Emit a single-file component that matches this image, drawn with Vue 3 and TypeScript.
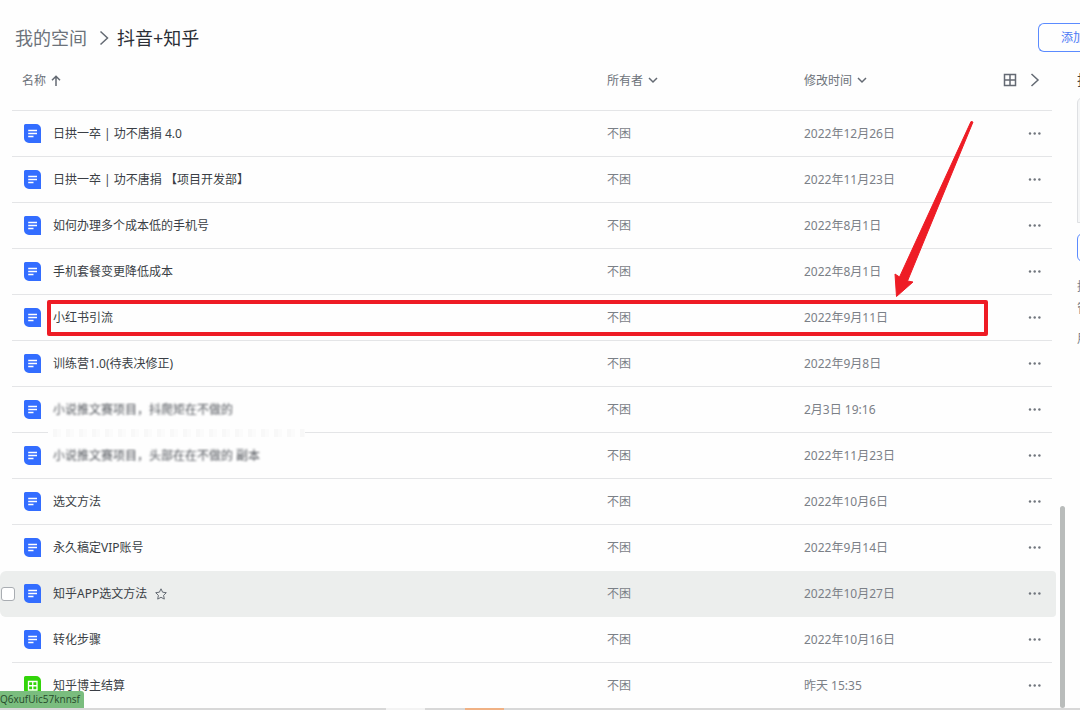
<script setup lang="ts">
interface FileRow {
  name: string
  owner: string
  time: string
  kind?: 'doc' | 'sheet'
  masked?: boolean
  active?: boolean
  marked?: boolean
}

const rows: FileRow[] = [
  { name: '日拱一卒 | 功不唐捐 4.0', owner: '不困', time: '2022年12月26日' },
  { name: '日拱一卒 | 功不唐捐 【项目开发部】', owner: '不困', time: '2022年11月23日' },
  { name: '如何办理多个成本低的手机号', owner: '不困', time: '2022年8月1日' },
  { name: '手机套餐变更降低成本', owner: '不困', time: '2022年8月1日' },
  { name: '小红书引流', owner: '不困', time: '2022年9月11日', marked: true },
  { name: '训练营1.0(待表决修正)', owner: '不困', time: '2022年9月8日' },
  { name: '小说推文赛项目，抖爬矩在不做的', owner: '不困', time: '2月3日 19:16', masked: true },
  { name: '小说推文赛项目，头部在在不做的 副本', owner: '不困', time: '2022年11月23日', masked: true },
  { name: '选文方法', owner: '不困', time: '2022年10月6日' },
  { name: '永久稿定VIP账号', owner: '不困', time: '2022年9月14日' },
  { name: '知乎APP选文方法', owner: '不困', time: '2022年10月27日', active: true },
  { name: '转化步骤', owner: '不困', time: '2022年10月16日' },
  { name: '知乎博主结算', owner: '不困', time: '昨天 15:35', kind: 'sheet' },
]
</script>

<template>
  <div class="page">
    <header class="topbar">
      <nav class="crumbs" aria-label="路径">
        <a href="#" class="parent">我的空间</a>
        <svg width="10" height="16" viewBox="0 0 10 16"><path d="M1.500 1.500 8.500 8l-7 6.500" /></svg>
        <h1>抖音+知乎</h1>
      </nav>
      <button class="add" type="button">添加</button>
    </header>

    <div class="content">
      <main class="list">
        <table>
          <colgroup>
            <col class="c-check" /><col class="c-name" /><col class="c-owner" /><col class="c-time" /><col class="c-more" /><col class="c-end" />
          </colgroup>
          <thead>
            <tr>
              <th></th>
              <th class="name-head">
                <button type="button">名称
                  <svg width="10" height="12" viewBox="0 0 10 12"><path d="M5 11V1.500M1 5.200l4-4 4 4" /></svg>
                </button>
              </th>
              <th>
                <button type="button">所有者
                  <svg width="10" height="12" viewBox="0 0 10 12"><path d="m1 3 4 4 4-4" /></svg>
                </button>
              </th>
              <th>
                <button type="button">修改时间
                  <svg width="10" height="12" viewBox="0 0 10 12"><path d="m1 3 4 4 4-4" /></svg>
                </button>
              </th>
              <th>
                <div class="tools">
                  <button type="button" aria-label="网格视图">
                    <svg width="14" height="14" viewBox="0 0 14 14"><path d="M1.500 1.500h11v11h-11zM7 1.500v11M1.500 7h11" /></svg>
                  </button>
                  <button type="button" aria-label="收起">
                    <svg width="10" height="14" viewBox="0 0 10 14"><path d="M1.500 1 8 7l-6.500 6" /></svg>
                  </button>
                </div>
              </th>
              <th></th>
            </tr>
          </thead>
          <tbody>
            <tr v-for="(row, i) in rows" :key="i" :class="{ active: row.active }">
              <td class="check"><input v-if="row.active" type="checkbox" :aria-label="row.name" /></td>
              <td class="name">
                <div class="file">
                  <svg v-if="row.kind === 'sheet'" class="icon" width="17" height="19" viewBox="0 0 17 19">
                    <path class="green" d="M1.500 0H12a5 5 0 0 1 5 5v14H5a5 5 0 0 1-5-5V1.500A1.500 1.500 0 0 1 1.500 0z" />
                    <path class="line" d="M4.500 5.500h8.500v8.500H4.500zM8.750 5.500V14M4.500 9.750H13" />
                  </svg>
                  <svg v-else class="icon" width="17" height="19" viewBox="0 0 17 19">
                    <path class="blue" d="M1.500 0H12a5 5 0 0 1 5 5v14H5a5 5 0 0 1-5-5V1.500A1.500 1.500 0 0 1 1.500 0z" />
                    <path class="line" d="M4.200 6.500h8.800M4.200 9.500h8.800M4.200 12.500h5.300" />
                  </svg>
                  <a href="#" :class="{ masked: row.masked }">{{ row.name }}</a>
                  <button v-if="row.active" class="star" type="button" aria-label="收藏">
                    <svg width="12" height="12" viewBox="0 0 12 12"><path d="m6 .8 1.600 3.400 3.700.5-2.700 2.600.7 3.800L6 9.300l-3.300 1.800.7-3.800L.7 4.700l3.700-.5z" /></svg>
                  </button>
                </div>
                <div v-if="row.marked" class="marker">
                  <svg class="arrow" width="84" height="180" viewBox="0 0 84 180">
                    <path d="M79 1.500 81 2 15.500 161 21 162 4.500 176.500 3 154 7.500 157z" />
                  </svg>
                </div>
                <div v-if="i === 6" class="smudge"></div>
              </td>
              <td>{{ row.owner }}</td>
              <td>{{ row.time }}</td>
              <td class="more">
                <button type="button" aria-label="更多">
                  <svg width="14" height="4" viewBox="0 0 14 4"><circle cx="2" cy="1.500" r="1.200" /><circle cx="6.700" cy="1.500" r="1.200" /><circle cx="11.400" cy="1.500" r="1.200" /></svg>
                </button>
              </td>
              <td class="end"></td>
            </tr>
          </tbody>
        </table>
      </main>

      <aside class="side">
        <h2>找</h2>
        <div class="card"></div>
        <button type="button" aria-label="打开"></button>
        <p>推<br />管</p>
        <p>用</p>
      </aside>
    </div>

    <div class="scrollbar"></div>
    <div class="status">Q6xufUic57knnsf</div>
    <div class="dock"><i class="light"></i><i class="orange"></i></div>
  </div>
</template>

<style>
body {
  margin: 0;
}
</style>

<style scoped>
.page {
  position: relative;
  height: 100vh;
  overflow: hidden;
  background: #fefefe;
  color: #3a3e45;
  font: 12px/20px "Noto Sans", "Noto Sans CJK SC", sans-serif;
}
button {
  padding: 0;
  border: 0;
  background: none;
  color: inherit;
  font: inherit;
}
a {
  color: inherit;
  text-decoration: none;
}
svg {
  display: block;
  flex: none;
  fill: none;
  stroke: #646a73;
  stroke-width: 1.5;
}
.topbar {
  display: flex;
  justify-content: space-between;
  padding: 23px 0 0 15px;
}
.crumbs {
  display: flex;
  align-items: center;
  gap: 8px;
  height: 29px;
  font-size: 18px;
}
.crumbs svg {
  margin-left: 4px;
}
.parent {
  color: #6c727a;
}
h1 {
  margin: 0;
  font-size: 18px;
  font-weight: 400;
  color: #2b2f36;
}
.add {
  width: 42px;
  height: 29px;
  padding-left: 22px;
  overflow: hidden;
  border: 1px solid #5b8bff;
  border-right: 0;
  border-radius: 6px 0 0 6px;
  color: #4a78f5;
  text-align: left;
  white-space: nowrap;
}
.content {
  display: grid;
  grid-template-columns: minmax(0, 1fr) 3px;
  column-gap: 21px;
}
table {
  width: 100%;
  table-layout: fixed;
  border-collapse: separate;
  border-spacing: 0;
}
.c-check {
  width: 12px;
}
.c-owner {
  width: 197px;
}
.c-time {
  width: 197px;
}
.c-more {
  width: 51px;
}
.c-end {
  width: 4px;
}
th,
td {
  padding: 0;
  text-align: left;
  font-weight: 400;
  color: #7b8087;
  border-bottom: 1px solid #e4e5e7;
}
th {
  height: 58px;
  vertical-align: top;
}
th > button {
  display: flex;
  align-items: center;
  gap: 5px;
  margin-top: 19px;
  color: #6c727a;
}
.name-head {
  padding-left: 10px;
}
td {
  height: 45px;
}
th:first-child,
th:last-child,
td.check,
td.end {
  border-bottom-color: transparent;
}
.tools {
  display: flex;
  align-items: center;
  justify-content: flex-end;
  gap: 13px;
  height: 20px;
  margin-top: 18px;
  padding-right: 12px;
}
.check {
  position: relative;
  z-index: 1;
}
.check input {
  display: block;
  appearance: none;
  box-sizing: border-box;
  width: 14px;
  height: 14px;
  margin: 0 0 0 1px;
  border: 1px solid #a9adb2;
  border-radius: 3px;
  background: #fff;
}
.name {
  position: relative;
  padding-left: 12px;
  color: #3a3e45;
}
.file {
  display: flex;
  align-items: center;
  white-space: nowrap;
}
.icon {
  margin-right: 12px;
}
.icon path {
  stroke: none;
}
.icon .blue {
  fill: #336dff;
}
.icon .green {
  fill: #32d40a;
}
.icon .line {
  stroke: #fff;
  stroke-width: 1.3;
}
.masked {
  color: #50545a;
  filter: blur(1px);
}
.star {
  margin-left: 8px;
}
.star svg {
  stroke-width: 1;
}
.active td {
  background: #eceeed;
  border-bottom-color: #eceeed;
}
.active td:first-child {
  border-radius: 6px 0 0 6px;
}
.active td:last-child {
  border-radius: 0 6px 6px 0;
}
tr:has(+ .active) td {
  border-bottom-color: transparent;
}
.more svg {
  fill: #70757d;
  stroke: none;
}
.more button {
  display: block;
  margin: 0 10px 0 auto;
}
/* Highlight drawn over the row, from the name to the date column */
.marker {
  position: absolute;
  z-index: 1;
  top: 5px;
  left: 35px;
  right: -381px;
  height: 28px;
  border: 4px solid #ee1c25;
  border-radius: 2px;
}
.arrow {
  position: absolute;
  right: 8px;
  bottom: 32px;
}
.arrow path {
  fill: #ee1c25;
  stroke: #ee1c25;
  stroke-width: 1;
  stroke-linejoin: round;
}
.smudge {
  position: absolute;
  z-index: 1;
  left: 36px;
  bottom: -5px;
  width: 257px;
  height: 8px;
  background: repeating-linear-gradient(90deg, #fefefe 0 5px, #f8f8f8 5px 9px, #fbfbfb 9px 13px);
}
.side {
  overflow: hidden;
  padding-top: 18px;
}
.side h2 {
  margin: 0;
  font-size: 14px;
  line-height: 20px;
  font-weight: 400;
}
.side .card {
  width: 240px;
  height: 124px;
  margin-top: 7px;
  border: 1px solid #dee0e3;
  border-radius: 6px 0 0 0;
  background: #f5f6f7;
}
.side button {
  display: block;
  width: 240px;
  height: 29px;
  margin: 10px 0 14px;
  border: 1px solid #5b8bff;
  border-radius: 6px;
}
.side p {
  margin: 0 0 8px;
  line-height: 22px;
  color: #7b8087;
}
.scrollbar {
  position: absolute;
  right: 15px;
  bottom: 2px;
  width: 5px;
  height: 202px;
  border-radius: 3px;
  background: #b9bcbb;
}
.status {
  position: absolute;
  z-index: 2;
  left: 0;
  bottom: 2px;
  width: 84px;
  height: 17px;
  border-radius: 0 3px 0 0;
  background: #7abd7e;
  color: #26492b;
  font: 10px/17px "Open Sans", sans-serif;
}
.dock {
  position: absolute;
  left: 0;
  right: 0;
  bottom: 0;
  display: flex;
  gap: 40px;
  height: 2px;
  padding-left: 386px;
  background: #d8d8d8;
}
.dock i {
  width: 39px;
}
.light {
  background: #f3f3f3;
}
.orange {
  background: #f0b184;
}
</style>
